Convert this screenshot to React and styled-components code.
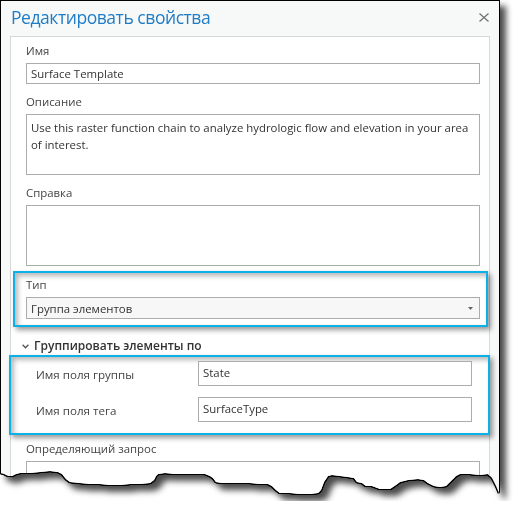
import React from "react";
import styled, { createGlobalStyle } from "styled-components";

const Global = createGlobalStyle`
  html, body { margin: 0; padding: 0; background: #ffffff; }
  body { font-family: "Open Sans", "Noto Sans", sans-serif; }
  * { box-sizing: border-box; }
`;

const TORN = [
  [0, 473], [4, 474], [8, 476], [12, 476], [16, 474], [20, 473], [30, 473], [40, 472],
  [50, 471], [58, 472], [62, 474], [66, 479], [70, 482], [80, 483], [90, 484], [100, 484],
  [110, 485], [120, 485], [130, 484], [140, 484], [150, 483], [154, 480], [156, 476],
  [158, 474], [165, 473], [175, 474], [185, 474], [195, 474], [205, 474], [210, 476],
  [213, 478], [216, 482], [222, 483], [230, 483], [240, 483], [250, 483], [260, 484],
  [268, 484], [272, 486], [276, 490], [280, 493], [290, 493], [300, 494], [310, 494],
  [318, 493], [321, 490], [324, 482], [328, 476], [332, 475], [340, 476], [348, 477],
  [354, 478], [357, 482], [362, 483], [366, 486], [372, 486], [380, 489], [390, 489],
  [396, 485], [400, 482], [408, 480], [418, 479], [424, 480], [428, 483], [434, 486],
  [440, 487], [446, 486], [450, 482], [456, 476], [460, 474], [470, 474], [480, 475],
  [488, 474], [492, 478], [496, 486], [499, 493],
];

const clip = (() => {
  const pts = ["0px 0px", "498px 0px"];
  const rev = [...TORN].reverse();
  rev.forEach(([x, y]) => pts.push(`${Math.min(x - 1, 498)}px ${y - 1}px`));
  return `polygon(${pts.join(", ")})`;
})();

const Frame = styled.div`
  margin: 1px 0 0 1px;
  width: 498px;
  filter: drop-shadow(1px 0 0 #000) drop-shadow(-1px 0 0 #000)
    drop-shadow(0 1px 0 #000) drop-shadow(0 -1px 0 #000)
    drop-shadow(6px 6px 3px rgba(0, 0, 0, 0.7));
`;

const Window = styled.div`
  width: 498px;
  height: 500px;
  background: #f7f9f9;
  overflow: hidden;
  display: flex;
  flex-direction: column;
`;

const TitleBar = styled.div`
  height: 37px;
  display: flex;
  align-items: center;
  justify-content: space-between;
  padding: 0 10px 4px 10px;
`;

const Title = styled.div`
  font-size: 17.5px;
  letter-spacing: -0.45px;
  color: #1f7cc6;
  line-height: 24px;
`;

const Close = styled.svg`
  width: 10px;
  height: 9px;
  margin-top: 2px;
`;

const Panel = styled.div`
  margin: 0 9px;
  flex: 1;
  background: #ffffff;
  border: 1px solid #d6d8d8;
  border-bottom: none;
  padding: 0 9px 0 15px;
  display: flex;
  flex-direction: column;
`;

const Field = styled.div`
  margin-top: ${(p) => p.$mt}px;
  display: flex;
  flex-direction: column;
`;

const Label = styled.div`
  font-size: 11.4px;
  line-height: 16px;
  height: 16px;
  color: #444;
  margin-bottom: 4px;
`;

const Input = styled.div`
  height: ${(p) => p.$h || 21}px;
  border: 1px solid #acacac;
  background: ${(p) => p.$bg || "#fff"};
  font-size: 11.4px;
  color: #333;
  padding: ${(p) => p.$pad || "0 4px"};
  line-height: ${(p) => p.$lh || 19}px;
  white-space: pre;
  overflow: hidden;
  display: flex;
  align-items: ${(p) => (p.$top ? "flex-start" : "center")};
  justify-content: space-between;
`;

const Highlight = styled.div`
  margin: ${(p) => p.$margin};
  padding: ${(p) => p.$pad};
  border: 2px solid #0cb1e8;
  box-shadow: 3px 3px 5px rgba(0, 0, 0, 0.4), inset 3px 3px 5px rgba(0, 0, 0, 0.28);
  display: flex;
  flex-direction: column;
  gap: ${(p) => p.$gap || 0}px;
`;

const GroupHeader = styled.div`
  margin-top: 11px;
  height: 16px;
  line-height: 16px;
  display: flex;
  align-items: center;
  gap: 5px;
  margin-left: -4px;
  font-size: 12px;
  font-weight: 600;
  color: #333;
`;

const Row = styled.div`
  display: grid;
  grid-template-columns: 162px 274px;
  align-items: center;
`;

const RowLabel = styled.div`
  font-size: 11.6px;
  color: #444;
  padding-top: 2px;
`;

const Arrow = styled.svg`
  width: 5px;
  height: 3px;
  margin-right: 2px;
`;

export default function App() {
  return (
    <>
      <Global />
      <Frame>
        <Window style={{ clipPath: clip }}>
          <TitleBar>
            <Title>Редактировать свойства</Title>
            <Close viewBox="0 0 10 9">
              <path d="M0.5 0.5 L9.5 8.5 M9.5 0.5 L0.5 8.5" stroke="#707070" strokeWidth="1.2" fill="none" />
            </Close>
          </TitleBar>
          <Panel>
            <Field $mt={6}>
              <Label>Имя</Label>
              <Input>Surface Template</Input>
            </Field>
            <Field $mt={10}>
              <Label>Описание</Label>
              <Input $h={61} $top $pad="4px 4px" $lh={17}>
                {"Use this raster function chain to analyze hydrologic flow and elevation in your area\nof interest."}
              </Input>
            </Field>
            <Field $mt={10}>
              <Label>Справка</Label>
              <Input $h={61} />
            </Field>
            <Highlight $margin="5px -8px 0 -13px" $pad="4px 6px 6px 11px">
              <Label>Тип</Label>
              <Input $h={22} $bg="#f7f7f7">
                <span>Группа элементов</span>
                <Arrow viewBox="0 0 5 3">
                  <path d="M0 0 L5 0 L2.5 3 Z" fill="#666" />
                </Arrow>
              </Input>
            </Highlight>
            <GroupHeader>
              <svg width="7" height="5" viewBox="0 0 7 5">
                <path d="M0.6 0.8 L3.5 3.8 L6.4 0.8" stroke="#555" strokeWidth="1.3" fill="none" />
              </svg>
              Группировать элементы по
            </GroupHeader>
            <Highlight $margin="1px -10px 0 -17px" $pad="4px 15px 11px 25px" $gap={11}>
              <Row>
                <RowLabel>Имя поля группы</RowLabel>
                <Input $h={25} $top $pad="2px 4px" $lh={18}>State</Input>
              </Row>
              <Row>
                <RowLabel>Имя поля тега</RowLabel>
                <Input $h={25} $top $pad="2px 4px" $lh={18}>SurfaceType</Input>
              </Row>
            </Highlight>
            <Field $mt={6}>
              <Label>Определяющий запрос</Label>
              <Input $h={40} />
            </Field>
          </Panel>
        </Window>
      </Frame>
    </>
  );
}
